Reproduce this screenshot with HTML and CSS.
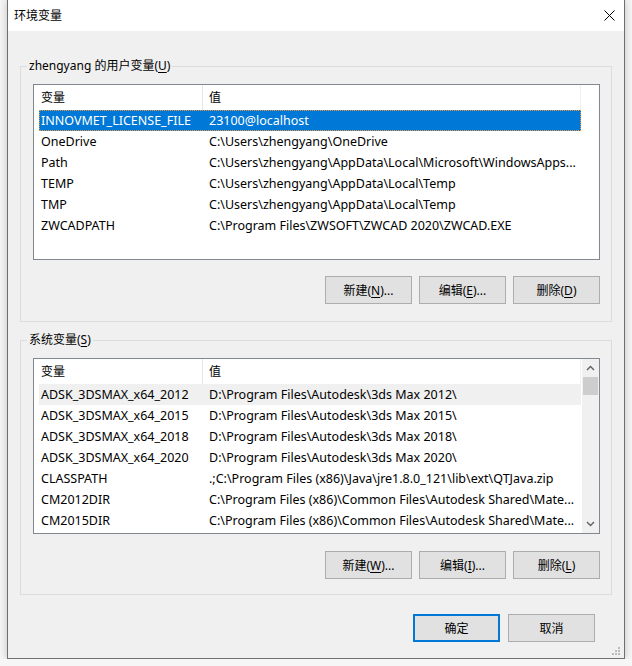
FILE: index.html
```html
<!DOCTYPE html>
<html lang="zh-CN">
  <head>
    <meta charset="UTF-8" />
    <title>环境变量</title>
    <link rel="stylesheet" href="styles.css">
  </head>

  <body>
    <div class="window">
      <div class="titlebar">
        <span class="title">环境变量</span>
        <svg class="close" width="11" height="11" viewBox="0 0 11 11">
          <path d="M0.5 0.5 L10.5 10.5 M10.5 0.5 L0.5 10.5" stroke="#000" stroke-width="1" fill="none" />
        </svg>
      </div>

      <div class="content">
        <!-- 用户变量 -->
        <fieldset class="group group_user">
          <legend>zhengyang 的用户变量(<u>U</u>)</legend>
          <div class="listbox">
            <div class="list">
              <div class="list_head">
                <div class="head_name">变量</div>
                <div class="head_value">值</div>
              </div>
              <div class="rows">
                <div class="row selected">
                  <span class="cell_name">INNOVMET_LICENSE_FILE</span>
                  <span class="cell_value">23100@localhost</span>
                </div>
                <div class="row">
                  <span class="cell_name">OneDrive</span>
                  <span class="cell_value">C:\Users\zhengyang\OneDrive</span>
                </div>
                <div class="row">
                  <span class="cell_name">Path</span>
                  <span class="cell_value">C:\Users\zhengyang\AppData\Local\Microsoft\WindowsApps...</span>
                </div>
                <div class="row">
                  <span class="cell_name">TEMP</span>
                  <span class="cell_value">C:\Users\zhengyang\AppData\Local\Temp</span>
                </div>
                <div class="row">
                  <span class="cell_name">TMP</span>
                  <span class="cell_value">C:\Users\zhengyang\AppData\Local\Temp</span>
                </div>
                <div class="row">
                  <span class="cell_name">ZWCADPATH</span>
                  <span class="cell_value">C:\Program Files\ZWSOFT\ZWCAD 2020\ZWCAD.EXE</span>
                </div>
              </div>
            </div>
          </div>
          <div class="actions">
            <button class="btn">新建(<u>N</u>)...</button>
            <button class="btn">编辑(<u>E</u>)...</button>
            <button class="btn">删除(<u>D</u>)</button>
          </div>
        </fieldset>

        <!-- 系统变量 -->
        <fieldset class="group group_sys">
          <legend>系统变量(<u>S</u>)</legend>
          <div class="listbox">
            <div class="list">
              <div class="list_head">
                <div class="head_name">变量</div>
                <div class="head_value">值</div>
              </div>
              <div class="rows">
                <div class="row hover">
                  <span class="cell_name">ADSK_3DSMAX_x64_2012</span>
                  <span class="cell_value">D:\Program Files\Autodesk\3ds Max 2012\</span>
                </div>
                <div class="row">
                  <span class="cell_name">ADSK_3DSMAX_x64_2015</span>
                  <span class="cell_value">D:\Program Files\Autodesk\3ds Max 2015\</span>
                </div>
                <div class="row">
                  <span class="cell_name">ADSK_3DSMAX_x64_2018</span>
                  <span class="cell_value">D:\Program Files\Autodesk\3ds Max 2018\</span>
                </div>
                <div class="row">
                  <span class="cell_name">ADSK_3DSMAX_x64_2020</span>
                  <span class="cell_value">D:\Program Files\Autodesk\3ds Max 2020\</span>
                </div>
                <div class="row">
                  <span class="cell_name">CLASSPATH</span>
                  <span class="cell_value">.;C:\Program Files (x86)\Java\jre1.8.0_121\lib\ext\QTJava.zip</span>
                </div>
                <div class="row">
                  <span class="cell_name">CM2012DIR</span>
                  <span class="cell_value">C:\Program Files (x86)\Common Files\Autodesk Shared\Mate...</span>
                </div>
                <div class="row">
                  <span class="cell_name">CM2015DIR</span>
                  <span class="cell_value">C:\Program Files (x86)\Common Files\Autodesk Shared\Mate...</span>
                </div>
              </div>
            </div>
            <div class="scrollbar">
              <div class="sb_btn">
                <svg width="17" height="17" viewBox="0 0 17 17">
                  <path d="M5 11 L8.5 7.5 L12 11" stroke="#606060" stroke-width="1.4" fill="none" />
                </svg>
              </div>
              <div class="sb_track">
                <div class="sb_thumb"></div>
              </div>
              <div class="sb_btn">
                <svg width="17" height="17" viewBox="0 0 17 17">
                  <path d="M5 6 L8.5 9.5 L12 6" stroke="#606060" stroke-width="1.4" fill="none" />
                </svg>
              </div>
            </div>
          </div>
          <div class="actions">
            <button class="btn">新建(<u>W</u>)...</button>
            <button class="btn">编辑(<u>I</u>)...</button>
            <button class="btn">删除(<u>L</u>)</button>
          </div>
        </fieldset>

        <div class="footer">
          <button class="btn btn_primary">确定</button>
          <button class="btn">取消</button>
        </div>
      </div>

      <!-- 右下角拖拽手柄 -->
      <svg class="grip" width="9" height="9" viewBox="0 0 9 9">
        <g fill="#bcbcbc">
          <rect x="6" y="0" width="2" height="2" />
          <rect x="3" y="3" width="2" height="2" />
          <rect x="6" y="3" width="2" height="2" />
          <rect x="0" y="6" width="2" height="2" />
          <rect x="3" y="6" width="2" height="2" />
          <rect x="6" y="6" width="2" height="2" />
        </g>
      </svg>
    </div>
  </body>
</html>
```

FILE: styles.css
```css
* {
  margin: 0;
  padding: 0;
  box-sizing: border-box;
}

body {
  background-color: #f6f6f6;
  font-family: "Noto Sans", "Noto Sans CJK SC", sans-serif;
  font-size: 12px;
  color: #000;
}

u {
  text-decoration: underline;
  text-underline-offset: 2px;
}

.window {
  position: relative;
  width: 618px;
  height: 659px;
  margin-left: 7px;
  border: 1px solid #6f6f6f;
  border-top: none;
  background-color: #f0f0f0;
  box-shadow: 0 0 8px rgba(0, 0, 0, 0.22);
}

.titlebar {
  display: flex;
  justify-content: space-between;
  align-items: center;
  height: 31px;
  padding: 0 9px 0 6px;
  background-color: #fff;
}

.title {
  line-height: 31px;
  padding-bottom: 1px;
}

.content {
  padding: 27px 12px 0 12px;
}

.group {
  border: 1px solid #dcdcdc;
  padding: 10px 11px 17px 12px;
  min-width: 0;
}

.group legend {
  line-height: 16px;
  padding: 0 2px;
  margin-left: -6px;
}

.group_sys {
  margin-top: 10px;
  padding-bottom: 15px;
}

.listbox {
  display: flex;
  height: 176px;
  border: 1px solid #828790;
  background-color: #fff;
}

.list {
  flex: 1;
  overflow: hidden;
}

.list_head {
  display: flex;
  height: 25px;
  line-height: 25px;
}

.head_name {
  width: 169px;
  padding-left: 7px;
  border-right: 1px solid #e5e5e5;
}

.head_value {
  width: 378px;
  padding-left: 6px;
  border-right: 1px solid #f0f0f0;
}

.rows {
  padding-left: 5px;
}

.row {
  display: flex;
  width: 542px;
  height: 21px;
  line-height: 21px;
  font-size: 12.5px;
  white-space: nowrap;
}

.row.selected {
  background-color: #0078d7;
  color: #fff;
  outline: 1px dotted #f59a3b;
  outline-offset: -1px;
}

.row.hover {
  background-color: #f0f0f0;
}

.cell_name {
  width: 168px;
  padding-left: 2px;
}

.cell_value {
  flex: 1;
  padding-left: 2px;
  overflow: hidden;
}

.scrollbar {
  display: flex;
  flex-direction: column;
  width: 17px;
  background-color: #f0f0f0;
}

.sb_btn {
  height: 17px;
}

.sb_btn svg {
  display: block;
}

.sb_track {
  flex: 1;
  padding: 1px 1px 0;
}

.sb_thumb {
  height: 18px;
  background-color: #cdcdcd;
}

.actions {
  display: flex;
  justify-content: flex-end;
  gap: 7px;
  margin-top: 16px;
}

.group_sys .actions {
  margin-top: 17px;
}

.btn {
  width: 87px;
  height: 28px;
  border: 1px solid #adadad;
  background-color: #e1e1e1;
  font-family: inherit;
  font-size: 12px;
  color: #000;
}

.btn_primary {
  border: 2px solid #0078d7;
}

.footer {
  display: flex;
  justify-content: flex-end;
  gap: 8px;
  margin-top: 19px;
  padding-right: 17px;
}

.grip {
  position: absolute;
  right: 3px;
  bottom: 2px;
}
```
